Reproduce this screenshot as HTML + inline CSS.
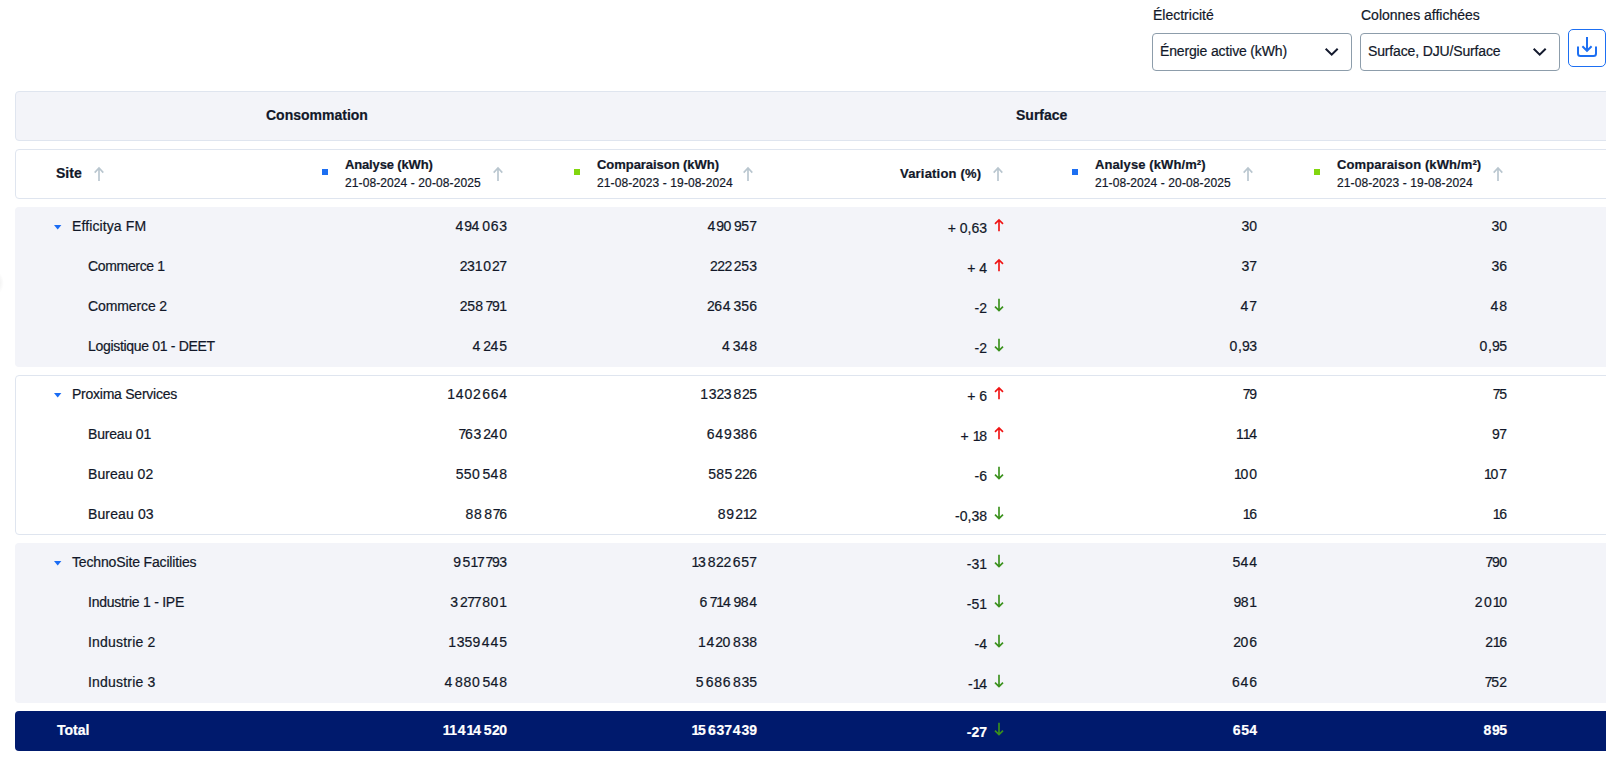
<!DOCTYPE html>
<html lang="fr">
<head>
<meta charset="utf-8">
<title>Consommation</title>
<style>
html,body{margin:0;padding:0;}
body{width:1615px;height:762px;overflow:hidden;background:#fff;position:relative;font-family:"Liberation Sans",sans-serif;color:#121829;-webkit-text-stroke:0.2px currentColor;}
.a{position:absolute;white-space:nowrap;}
.lbl{font-size:14px;line-height:20px;}
.sel{position:absolute;top:33px;width:198px;height:36px;border:1px solid #8d9dab;border-radius:4px;background:#fff;}
.sel .v{position:absolute;left:7px;top:7px;font-size:14px;line-height:20px;letter-spacing:-0.15px;}
.sel svg{position:absolute;left:171px;top:13px;}
.btn{position:absolute;left:1568px;top:29px;width:36px;height:36px;border:1px solid #1d6ff2;border-radius:5px;background:#fff;}
.btn svg{position:absolute;left:-1px;top:-1px;}
.wrap{position:absolute;left:15px;top:0;width:1591px;height:762px;overflow:hidden;}
.blk{position:absolute;left:0;width:1700px;box-sizing:border-box;border-radius:4px;}
.hd1{top:91px;height:50px;background:#f3f4f9;border:1px solid #dfe5ef;}
.hd2{top:149px;height:50px;background:#fff;border:1px solid #dfe5ef;}
.g{height:160px;background:#f3f4f9;}
.gw{height:160px;background:#fff;border:1px solid #dfe5ef;}
.tot{top:711px;height:40px;background:#001a6d;}
.t14{font-size:14px;line-height:20px;}
.b{font-weight:700;}
.num{position:absolute;font-size:14px;line-height:20px;text-align:right;white-space:nowrap;}
.hT{font-size:13px;font-weight:700;line-height:18px;letter-spacing:-0.15px;}
.hD{font-size:12px;line-height:18px;letter-spacing:0.1px;}
.sq{position:absolute;width:6px;height:6px;}
.nm{letter-spacing:-0.3px;}
.w{color:#fff;}
</style>
</head>
<body>
<!-- top controls -->
<div class="a lbl" style="left:1153px;top:5px;">Électricité</div>
<div class="sel" style="left:1152px;"><div class="v">Énergie active (kWh)</div>
<svg width="16" height="10" viewBox="0 0 16 10"><path d="M1.7 1.7 L7.7 7.7 L13.7 1.7" fill="none" stroke="#141a2e" stroke-width="2"/></svg></div>
<div class="a lbl" style="left:1361px;top:5px;">Colonnes affichées</div>
<div class="sel" style="left:1360px;"><div class="v">Surface, DJU/Surface</div>
<svg width="16" height="10" viewBox="0 0 16 10"><path d="M1.7 1.7 L7.7 7.7 L13.7 1.7" fill="none" stroke="#141a2e" stroke-width="2"/></svg></div>
<div class="btn"><svg width="38" height="38" viewBox="0 0 38 38"><path d="M10 17.5 V24.5 Q10 27 12.5 27 H25.5 Q28 27 28 24.5 V17.5" fill="none" stroke="#1d6ff2" stroke-width="2"/><path d="M19 8 V21.8 M14.4 17.2 L19 21.8 L23.6 17.2" fill="none" stroke="#1d6ff2" stroke-width="2"/></svg></div>

<div class="a" style="left:-9px;top:272px;width:13px;height:22px;border-radius:50%;background:radial-gradient(closest-side,rgba(0,0,0,0.07),rgba(0,0,0,0));"></div>
<div class="wrap">
<div class="blk hd1"></div>
<div class="blk hd2"></div>
<div class="blk g" style="top:207px;"></div>
<div class="blk gw" style="top:375px;"></div>
<div class="blk g" style="top:543px;"></div>
<div class="blk tot"></div>
</div>

<!-- TABLE CONTENT -->
<div class="a t14 b" style="left:266px;top:105px;">Consommation</div>
<div class="a t14 b" style="left:1016px;top:105px;">Surface</div>
<div class="a t14 b" style="left:56px;top:163px;">Site</div>
<svg class="a" style="left:93px;top:166px" width="12" height="16" viewBox="0 0 12 16"><path d="M6 1.6 V15 M1.7 6.6 L6 2 L10.3 6.6" fill="none" stroke="#b9c6cf" stroke-width="1.65"/></svg>
<div class="sq" style="left:322px;top:169px;background:#1d6ff2"></div>
<div class="a hT" style="left:345px;top:156px;letter-spacing:-0.15px">Analyse (kWh)</div>
<div class="a hD" style="left:345px;top:174px">21-08-2024 - 20-08-2025</div>
<svg class="a" style="left:492px;top:166px" width="12" height="16" viewBox="0 0 12 16"><path d="M6 1.6 V15 M1.7 6.6 L6 2 L10.3 6.6" fill="none" stroke="#b9c6cf" stroke-width="1.65"/></svg>
<div class="sq" style="left:574px;top:169px;background:#82d60e"></div>
<div class="a hT" style="left:597px;top:156px;letter-spacing:-0.05px">Comparaison (kWh)</div>
<div class="a hD" style="left:597px;top:174px">21-08-2023 - 19-08-2024</div>
<svg class="a" style="left:742px;top:166px" width="12" height="16" viewBox="0 0 12 16"><path d="M6 1.6 V15 M1.7 6.6 L6 2 L10.3 6.6" fill="none" stroke="#b9c6cf" stroke-width="1.65"/></svg>
<div class="sq" style="left:1072px;top:169px;background:#1d6ff2"></div>
<div class="a hT" style="left:1095px;top:156px;letter-spacing:0.1px">Analyse (kWh/m²)</div>
<div class="a hD" style="left:1095px;top:174px">21-08-2024 - 20-08-2025</div>
<svg class="a" style="left:1242px;top:166px" width="12" height="16" viewBox="0 0 12 16"><path d="M6 1.6 V15 M1.7 6.6 L6 2 L10.3 6.6" fill="none" stroke="#b9c6cf" stroke-width="1.65"/></svg>
<div class="sq" style="left:1314px;top:169px;background:#82d60e"></div>
<div class="a hT" style="left:1337px;top:156px;letter-spacing:0.1px">Comparaison (kWh/m²)</div>
<div class="a hD" style="left:1337px;top:174px">21-08-2023 - 19-08-2024</div>
<svg class="a" style="left:1492px;top:166px" width="12" height="16" viewBox="0 0 12 16"><path d="M6 1.6 V15 M1.7 6.6 L6 2 L10.3 6.6" fill="none" stroke="#b9c6cf" stroke-width="1.65"/></svg>
<div class="a hT" style="left:900px;top:165px;letter-spacing:0.2px">Variation (%)</div>
<svg class="a" style="left:992px;top:166px" width="12" height="16" viewBox="0 0 12 16"><path d="M6 1.6 V15 M1.7 6.6 L6 2 L10.3 6.6" fill="none" stroke="#b9c6cf" stroke-width="1.65"/></svg>
<svg class="a" style="left:54px;top:225px" width="8" height="5" viewBox="0 0 8 5"><path d="M0 0 H7.4 L3.7 4.5 Z" fill="#1a6cf4"/></svg>
<div class="a t14" style="left:72px;top:216px;letter-spacing:0.109px">Efficitya FM</div>
<div class="a t14" style="right:1108px;top:216px;"><span style="margin-right:0.95px">4</span><span style="margin-right:-0.60px">9</span><span style="margin-right:0.95px">4</span><span style="margin-right:-0.89px"> </span><span style="margin-right:0.82px">0</span><span style="margin-right:0.68px">6</span>3</div>
<div class="a t14" style="right:858px;top:216px;"><span style="margin-right:0.95px">4</span><span style="margin-right:-0.60px">9</span><span style="margin-right:0.82px">0</span><span style="margin-right:-0.89px"> </span><span style="margin-right:-0.60px">9</span><span style="margin-right:0.25px">5</span>7</div>
<div class="a t14" style="right:628px;top:218px;">+ 0,63</div>
<svg class="a" style="left:993px;top:217px" width="12" height="16" viewBox="0 0 12 16"><path d="M6 2.6 V14.3 M2 6.8 L6 2.8 L10 6.8" fill="none" stroke="#f01414" stroke-width="1.65"/></svg>
<div class="a t14" style="right:358px;top:216px;"><span style="margin-right:-0.02px">3</span>0</div>
<div class="a t14" style="right:108px;top:216px;"><span style="margin-right:-0.02px">3</span>0</div>
<div class="a t14" style="left:88px;top:256px;letter-spacing:-0.333px">Commerce 1</div>
<div class="a t14" style="right:1108px;top:256px;"><span style="margin-right:-0.48px">2</span><span style="margin-right:-0.02px">3</span><span style="margin-right:-1.22px">1</span><span style="margin-right:-0.89px"> </span><span style="margin-right:0.82px">0</span><span style="margin-right:-0.48px">2</span>7</div>
<div class="a t14" style="right:858px;top:256px;"><span style="margin-right:-0.48px">2</span><span style="margin-right:-0.48px">2</span><span style="margin-right:-0.48px">2</span><span style="margin-right:-0.89px"> </span><span style="margin-right:-0.48px">2</span><span style="margin-right:0.25px">5</span>3</div>
<div class="a t14" style="right:628px;top:258px;">+ 4</div>
<svg class="a" style="left:993px;top:257px" width="12" height="16" viewBox="0 0 12 16"><path d="M6 2.6 V14.3 M2 6.8 L6 2.8 L10 6.8" fill="none" stroke="#f01414" stroke-width="1.65"/></svg>
<div class="a t14" style="right:358px;top:256px;"><span style="margin-right:-0.02px">3</span>7</div>
<div class="a t14" style="right:108px;top:256px;"><span style="margin-right:-0.02px">3</span>6</div>
<div class="a t14" style="left:88px;top:296px;letter-spacing:-0.111px">Commerce 2</div>
<div class="a t14" style="right:1108px;top:296px;"><span style="margin-right:-0.48px">2</span><span style="margin-right:0.25px">5</span><span style="margin-right:0.60px">8</span><span style="margin-right:-0.89px"> </span><span style="margin-right:-1.31px">7</span><span style="margin-right:-0.60px">9</span>1</div>
<div class="a t14" style="right:858px;top:296px;"><span style="margin-right:-0.48px">2</span><span style="margin-right:0.68px">6</span><span style="margin-right:0.95px">4</span><span style="margin-right:-0.89px"> </span><span style="margin-right:-0.02px">3</span><span style="margin-right:0.25px">5</span>6</div>
<div class="a t14" style="right:628px;top:298px;">-2</div>
<svg class="a" style="left:993px;top:297px" width="12" height="16" viewBox="0 0 12 16"><path d="M6 1.8 V13.5 M2 9.7 L6 13.7 L10 9.7" fill="none" stroke="#3a911c" stroke-width="1.65"/></svg>
<div class="a t14" style="right:358px;top:296px;"><span style="margin-right:0.95px">4</span>7</div>
<div class="a t14" style="right:108px;top:296px;"><span style="margin-right:0.95px">4</span>8</div>
<div class="a t14" style="left:88px;top:336px;letter-spacing:-0.316px">Logistique 01 - DEET</div>
<div class="a t14" style="right:1108px;top:336px;"><span style="margin-right:0.95px">4</span><span style="margin-right:-0.89px"> </span><span style="margin-right:-0.48px">2</span><span style="margin-right:0.95px">4</span>5</div>
<div class="a t14" style="right:858px;top:336px;"><span style="margin-right:0.95px">4</span><span style="margin-right:-0.89px"> </span><span style="margin-right:-0.02px">3</span><span style="margin-right:0.95px">4</span>8</div>
<div class="a t14" style="right:628px;top:338px;">-2</div>
<svg class="a" style="left:993px;top:337px" width="12" height="16" viewBox="0 0 12 16"><path d="M6 1.8 V13.5 M2 9.7 L6 13.7 L10 9.7" fill="none" stroke="#3a911c" stroke-width="1.65"/></svg>
<div class="a t14" style="right:358px;top:336px;"><span style="margin-right:0.82px">0</span>,<span style="margin-right:-0.60px">9</span>3</div>
<div class="a t14" style="right:108px;top:336px;"><span style="margin-right:0.82px">0</span>,<span style="margin-right:-0.60px">9</span>5</div>
<svg class="a" style="left:54px;top:393px" width="8" height="5" viewBox="0 0 8 5"><path d="M0 0 H7.4 L3.7 4.5 Z" fill="#1a6cf4"/></svg>
<div class="a t14" style="left:72px;top:384px;letter-spacing:-0.247px">Proxima Services</div>
<div class="a t14" style="right:1108px;top:384px;"><span style="margin-right:-1.22px">1</span><span style="margin-right:-0.89px"> </span><span style="margin-right:0.95px">4</span><span style="margin-right:0.82px">0</span><span style="margin-right:-0.48px">2</span><span style="margin-right:-0.89px"> </span><span style="margin-right:0.68px">6</span><span style="margin-right:0.68px">6</span>4</div>
<div class="a t14" style="right:858px;top:384px;"><span style="margin-right:-1.22px">1</span><span style="margin-right:-0.89px"> </span><span style="margin-right:-0.02px">3</span><span style="margin-right:-0.48px">2</span><span style="margin-right:-0.02px">3</span><span style="margin-right:-0.89px"> </span><span style="margin-right:0.60px">8</span><span style="margin-right:-0.48px">2</span>5</div>
<div class="a t14" style="right:628px;top:386px;">+ 6</div>
<svg class="a" style="left:993px;top:385px" width="12" height="16" viewBox="0 0 12 16"><path d="M6 2.6 V14.3 M2 6.8 L6 2.8 L10 6.8" fill="none" stroke="#f01414" stroke-width="1.65"/></svg>
<div class="a t14" style="right:358px;top:384px;"><span style="margin-right:-1.31px">7</span>9</div>
<div class="a t14" style="right:108px;top:384px;"><span style="margin-right:-1.31px">7</span>5</div>
<div class="a t14" style="left:88px;top:424px;letter-spacing:-0.175px">Bureau 01</div>
<div class="a t14" style="right:1108px;top:424px;"><span style="margin-right:-1.31px">7</span><span style="margin-right:0.68px">6</span><span style="margin-right:-0.02px">3</span><span style="margin-right:-0.89px"> </span><span style="margin-right:-0.48px">2</span><span style="margin-right:0.95px">4</span>0</div>
<div class="a t14" style="right:858px;top:424px;"><span style="margin-right:0.68px">6</span><span style="margin-right:0.95px">4</span><span style="margin-right:-0.60px">9</span><span style="margin-right:-0.89px"> </span><span style="margin-right:-0.02px">3</span><span style="margin-right:0.60px">8</span>6</div>
<div class="a t14" style="right:628px;top:426px;">+ <span style="margin-right:-1.22px">1</span>8</div>
<svg class="a" style="left:993px;top:425px" width="12" height="16" viewBox="0 0 12 16"><path d="M6 2.6 V14.3 M2 6.8 L6 2.8 L10 6.8" fill="none" stroke="#f01414" stroke-width="1.65"/></svg>
<div class="a t14" style="right:358px;top:424px;"><span style="margin-right:-1.22px">1</span><span style="margin-right:-1.22px">1</span>4</div>
<div class="a t14" style="right:108px;top:424px;"><span style="margin-right:-0.60px">9</span>7</div>
<div class="a t14" style="left:88px;top:464px;letter-spacing:0.075px">Bureau 02</div>
<div class="a t14" style="right:1108px;top:464px;"><span style="margin-right:0.25px">5</span><span style="margin-right:0.25px">5</span><span style="margin-right:0.82px">0</span><span style="margin-right:-0.89px"> </span><span style="margin-right:0.25px">5</span><span style="margin-right:0.95px">4</span>8</div>
<div class="a t14" style="right:858px;top:464px;"><span style="margin-right:0.25px">5</span><span style="margin-right:0.60px">8</span><span style="margin-right:0.25px">5</span><span style="margin-right:-0.89px"> </span><span style="margin-right:-0.48px">2</span><span style="margin-right:-0.48px">2</span>6</div>
<div class="a t14" style="right:628px;top:466px;">-6</div>
<svg class="a" style="left:993px;top:465px" width="12" height="16" viewBox="0 0 12 16"><path d="M6 1.8 V13.5 M2 9.7 L6 13.7 L10 9.7" fill="none" stroke="#3a911c" stroke-width="1.65"/></svg>
<div class="a t14" style="right:358px;top:464px;"><span style="margin-right:-1.22px">1</span><span style="margin-right:0.82px">0</span>0</div>
<div class="a t14" style="right:108px;top:464px;"><span style="margin-right:-1.22px">1</span><span style="margin-right:0.82px">0</span>7</div>
<div class="a t14" style="left:88px;top:504px;letter-spacing:0.125px">Bureau 03</div>
<div class="a t14" style="right:1108px;top:504px;"><span style="margin-right:0.60px">8</span><span style="margin-right:0.60px">8</span><span style="margin-right:-0.89px"> </span><span style="margin-right:0.60px">8</span><span style="margin-right:-1.31px">7</span>6</div>
<div class="a t14" style="right:858px;top:504px;"><span style="margin-right:0.60px">8</span><span style="margin-right:-0.60px">9</span><span style="margin-right:-0.89px"> </span><span style="margin-right:-0.48px">2</span><span style="margin-right:-1.22px">1</span>2</div>
<div class="a t14" style="right:628px;top:506px;">-0,38</div>
<svg class="a" style="left:993px;top:505px" width="12" height="16" viewBox="0 0 12 16"><path d="M6 1.8 V13.5 M2 9.7 L6 13.7 L10 9.7" fill="none" stroke="#3a911c" stroke-width="1.65"/></svg>
<div class="a t14" style="right:358px;top:504px;"><span style="margin-right:-1.22px">1</span>6</div>
<div class="a t14" style="right:108px;top:504px;"><span style="margin-right:-1.22px">1</span>6</div>
<svg class="a" style="left:54px;top:561px" width="8" height="5" viewBox="0 0 8 5"><path d="M0 0 H7.4 L3.7 4.5 Z" fill="#1a6cf4"/></svg>
<div class="a t14" style="left:72px;top:552px;letter-spacing:-0.15px">TechnoSite Facilities</div>
<div class="a t14" style="right:1108px;top:552px;"><span style="margin-right:-0.60px">9</span><span style="margin-right:-0.89px"> </span><span style="margin-right:0.25px">5</span><span style="margin-right:-1.22px">1</span><span style="margin-right:-1.31px">7</span><span style="margin-right:-0.89px"> </span><span style="margin-right:-1.31px">7</span><span style="margin-right:-0.60px">9</span>3</div>
<div class="a t14" style="right:858px;top:552px;"><span style="margin-right:-1.22px">1</span><span style="margin-right:-0.02px">3</span><span style="margin-right:-0.89px"> </span><span style="margin-right:0.60px">8</span><span style="margin-right:-0.48px">2</span><span style="margin-right:-0.48px">2</span><span style="margin-right:-0.89px"> </span><span style="margin-right:0.68px">6</span><span style="margin-right:0.25px">5</span>7</div>
<div class="a t14" style="right:628px;top:554px;">-31</div>
<svg class="a" style="left:993px;top:553px" width="12" height="16" viewBox="0 0 12 16"><path d="M6 1.8 V13.5 M2 9.7 L6 13.7 L10 9.7" fill="none" stroke="#3a911c" stroke-width="1.65"/></svg>
<div class="a t14" style="right:358px;top:552px;"><span style="margin-right:0.25px">5</span><span style="margin-right:0.95px">4</span>4</div>
<div class="a t14" style="right:108px;top:552px;"><span style="margin-right:-1.31px">7</span><span style="margin-right:-0.60px">9</span>0</div>
<div class="a t14" style="left:88px;top:592px;letter-spacing:-0.256px">Industrie 1 - IPE</div>
<div class="a t14" style="right:1108px;top:592px;"><span style="margin-right:-0.02px">3</span><span style="margin-right:-0.89px"> </span><span style="margin-right:-0.48px">2</span><span style="margin-right:-1.31px">7</span><span style="margin-right:-1.31px">7</span><span style="margin-right:-0.89px"> </span><span style="margin-right:0.60px">8</span><span style="margin-right:0.82px">0</span>1</div>
<div class="a t14" style="right:858px;top:592px;"><span style="margin-right:0.68px">6</span><span style="margin-right:-0.89px"> </span><span style="margin-right:-1.31px">7</span><span style="margin-right:-1.22px">1</span><span style="margin-right:0.95px">4</span><span style="margin-right:-0.89px"> </span><span style="margin-right:-0.60px">9</span><span style="margin-right:0.60px">8</span>4</div>
<div class="a t14" style="right:628px;top:594px;">-51</div>
<svg class="a" style="left:993px;top:593px" width="12" height="16" viewBox="0 0 12 16"><path d="M6 1.8 V13.5 M2 9.7 L6 13.7 L10 9.7" fill="none" stroke="#3a911c" stroke-width="1.65"/></svg>
<div class="a t14" style="right:358px;top:592px;"><span style="margin-right:-0.60px">9</span><span style="margin-right:0.60px">8</span>1</div>
<div class="a t14" style="right:108px;top:592px;"><span style="margin-right:-0.48px">2</span><span style="margin-right:-0.89px"> </span><span style="margin-right:0.82px">0</span><span style="margin-right:-1.22px">1</span>0</div>
<div class="a t14" style="left:88px;top:632px;letter-spacing:0.2px">Industrie 2</div>
<div class="a t14" style="right:1108px;top:632px;"><span style="margin-right:-1.22px">1</span><span style="margin-right:-0.89px"> </span><span style="margin-right:-0.02px">3</span><span style="margin-right:0.25px">5</span><span style="margin-right:-0.60px">9</span><span style="margin-right:-0.89px"> </span><span style="margin-right:0.95px">4</span><span style="margin-right:0.95px">4</span>5</div>
<div class="a t14" style="right:858px;top:632px;"><span style="margin-right:-1.22px">1</span><span style="margin-right:-0.89px"> </span><span style="margin-right:0.95px">4</span><span style="margin-right:-0.48px">2</span><span style="margin-right:0.82px">0</span><span style="margin-right:-0.89px"> </span><span style="margin-right:0.60px">8</span><span style="margin-right:-0.02px">3</span>8</div>
<div class="a t14" style="right:628px;top:634px;">-4</div>
<svg class="a" style="left:993px;top:633px" width="12" height="16" viewBox="0 0 12 16"><path d="M6 1.8 V13.5 M2 9.7 L6 13.7 L10 9.7" fill="none" stroke="#3a911c" stroke-width="1.65"/></svg>
<div class="a t14" style="right:358px;top:632px;"><span style="margin-right:-0.48px">2</span><span style="margin-right:0.82px">0</span>6</div>
<div class="a t14" style="right:108px;top:632px;"><span style="margin-right:-0.48px">2</span><span style="margin-right:-1.22px">1</span>6</div>
<div class="a t14" style="left:88px;top:672px;letter-spacing:0.2px">Industrie 3</div>
<div class="a t14" style="right:1108px;top:672px;"><span style="margin-right:0.95px">4</span><span style="margin-right:-0.89px"> </span><span style="margin-right:0.60px">8</span><span style="margin-right:0.60px">8</span><span style="margin-right:0.82px">0</span><span style="margin-right:-0.89px"> </span><span style="margin-right:0.25px">5</span><span style="margin-right:0.95px">4</span>8</div>
<div class="a t14" style="right:858px;top:672px;"><span style="margin-right:0.25px">5</span><span style="margin-right:-0.89px"> </span><span style="margin-right:0.68px">6</span><span style="margin-right:0.60px">8</span><span style="margin-right:0.68px">6</span><span style="margin-right:-0.89px"> </span><span style="margin-right:0.60px">8</span><span style="margin-right:-0.02px">3</span>5</div>
<div class="a t14" style="right:628px;top:674px;">-<span style="margin-right:-1.22px">1</span>4</div>
<svg class="a" style="left:993px;top:673px" width="12" height="16" viewBox="0 0 12 16"><path d="M6 1.8 V13.5 M2 9.7 L6 13.7 L10 9.7" fill="none" stroke="#3a911c" stroke-width="1.65"/></svg>
<div class="a t14" style="right:358px;top:672px;"><span style="margin-right:0.68px">6</span><span style="margin-right:0.95px">4</span>6</div>
<div class="a t14" style="right:108px;top:672px;"><span style="margin-right:-1.31px">7</span><span style="margin-right:0.25px">5</span>2</div>
<div class="a t14 b w" style="left:57px;top:720px;">Total</div>
<div class="a t14 b w" style="right:1108px;top:720px;"><span style="margin-right:-1.22px">1</span><span style="margin-right:-1.22px">1</span><span style="margin-right:-0.89px"> </span><span style="margin-right:0.95px">4</span><span style="margin-right:-1.22px">1</span><span style="margin-right:0.95px">4</span><span style="margin-right:-0.89px"> </span><span style="margin-right:0.25px">5</span><span style="margin-right:-0.48px">2</span>0</div>
<div class="a t14 b w" style="right:858px;top:720px;"><span style="margin-right:-1.22px">1</span><span style="margin-right:0.25px">5</span><span style="margin-right:-0.89px"> </span><span style="margin-right:0.68px">6</span><span style="margin-right:-0.02px">3</span><span style="margin-right:-1.31px">7</span><span style="margin-right:-0.89px"> </span><span style="margin-right:0.95px">4</span><span style="margin-right:-0.02px">3</span>9</div>
<div class="a t14 b w" style="right:628px;top:722px;">-27</div>
<svg class="a" style="left:993px;top:721px" width="12" height="16" viewBox="0 0 12 16"><path d="M6 1.8 V13.5 M2 9.7 L6 13.7 L10 9.7" fill="none" stroke="#3a911c" stroke-width="1.65"/></svg>
<div class="a t14 b w" style="right:358px;top:720px;"><span style="margin-right:0.68px">6</span><span style="margin-right:0.25px">5</span>4</div>
<div class="a t14 b w" style="right:108px;top:720px;"><span style="margin-right:0.60px">8</span><span style="margin-right:-0.60px">9</span>5</div>
</body>
</html>
